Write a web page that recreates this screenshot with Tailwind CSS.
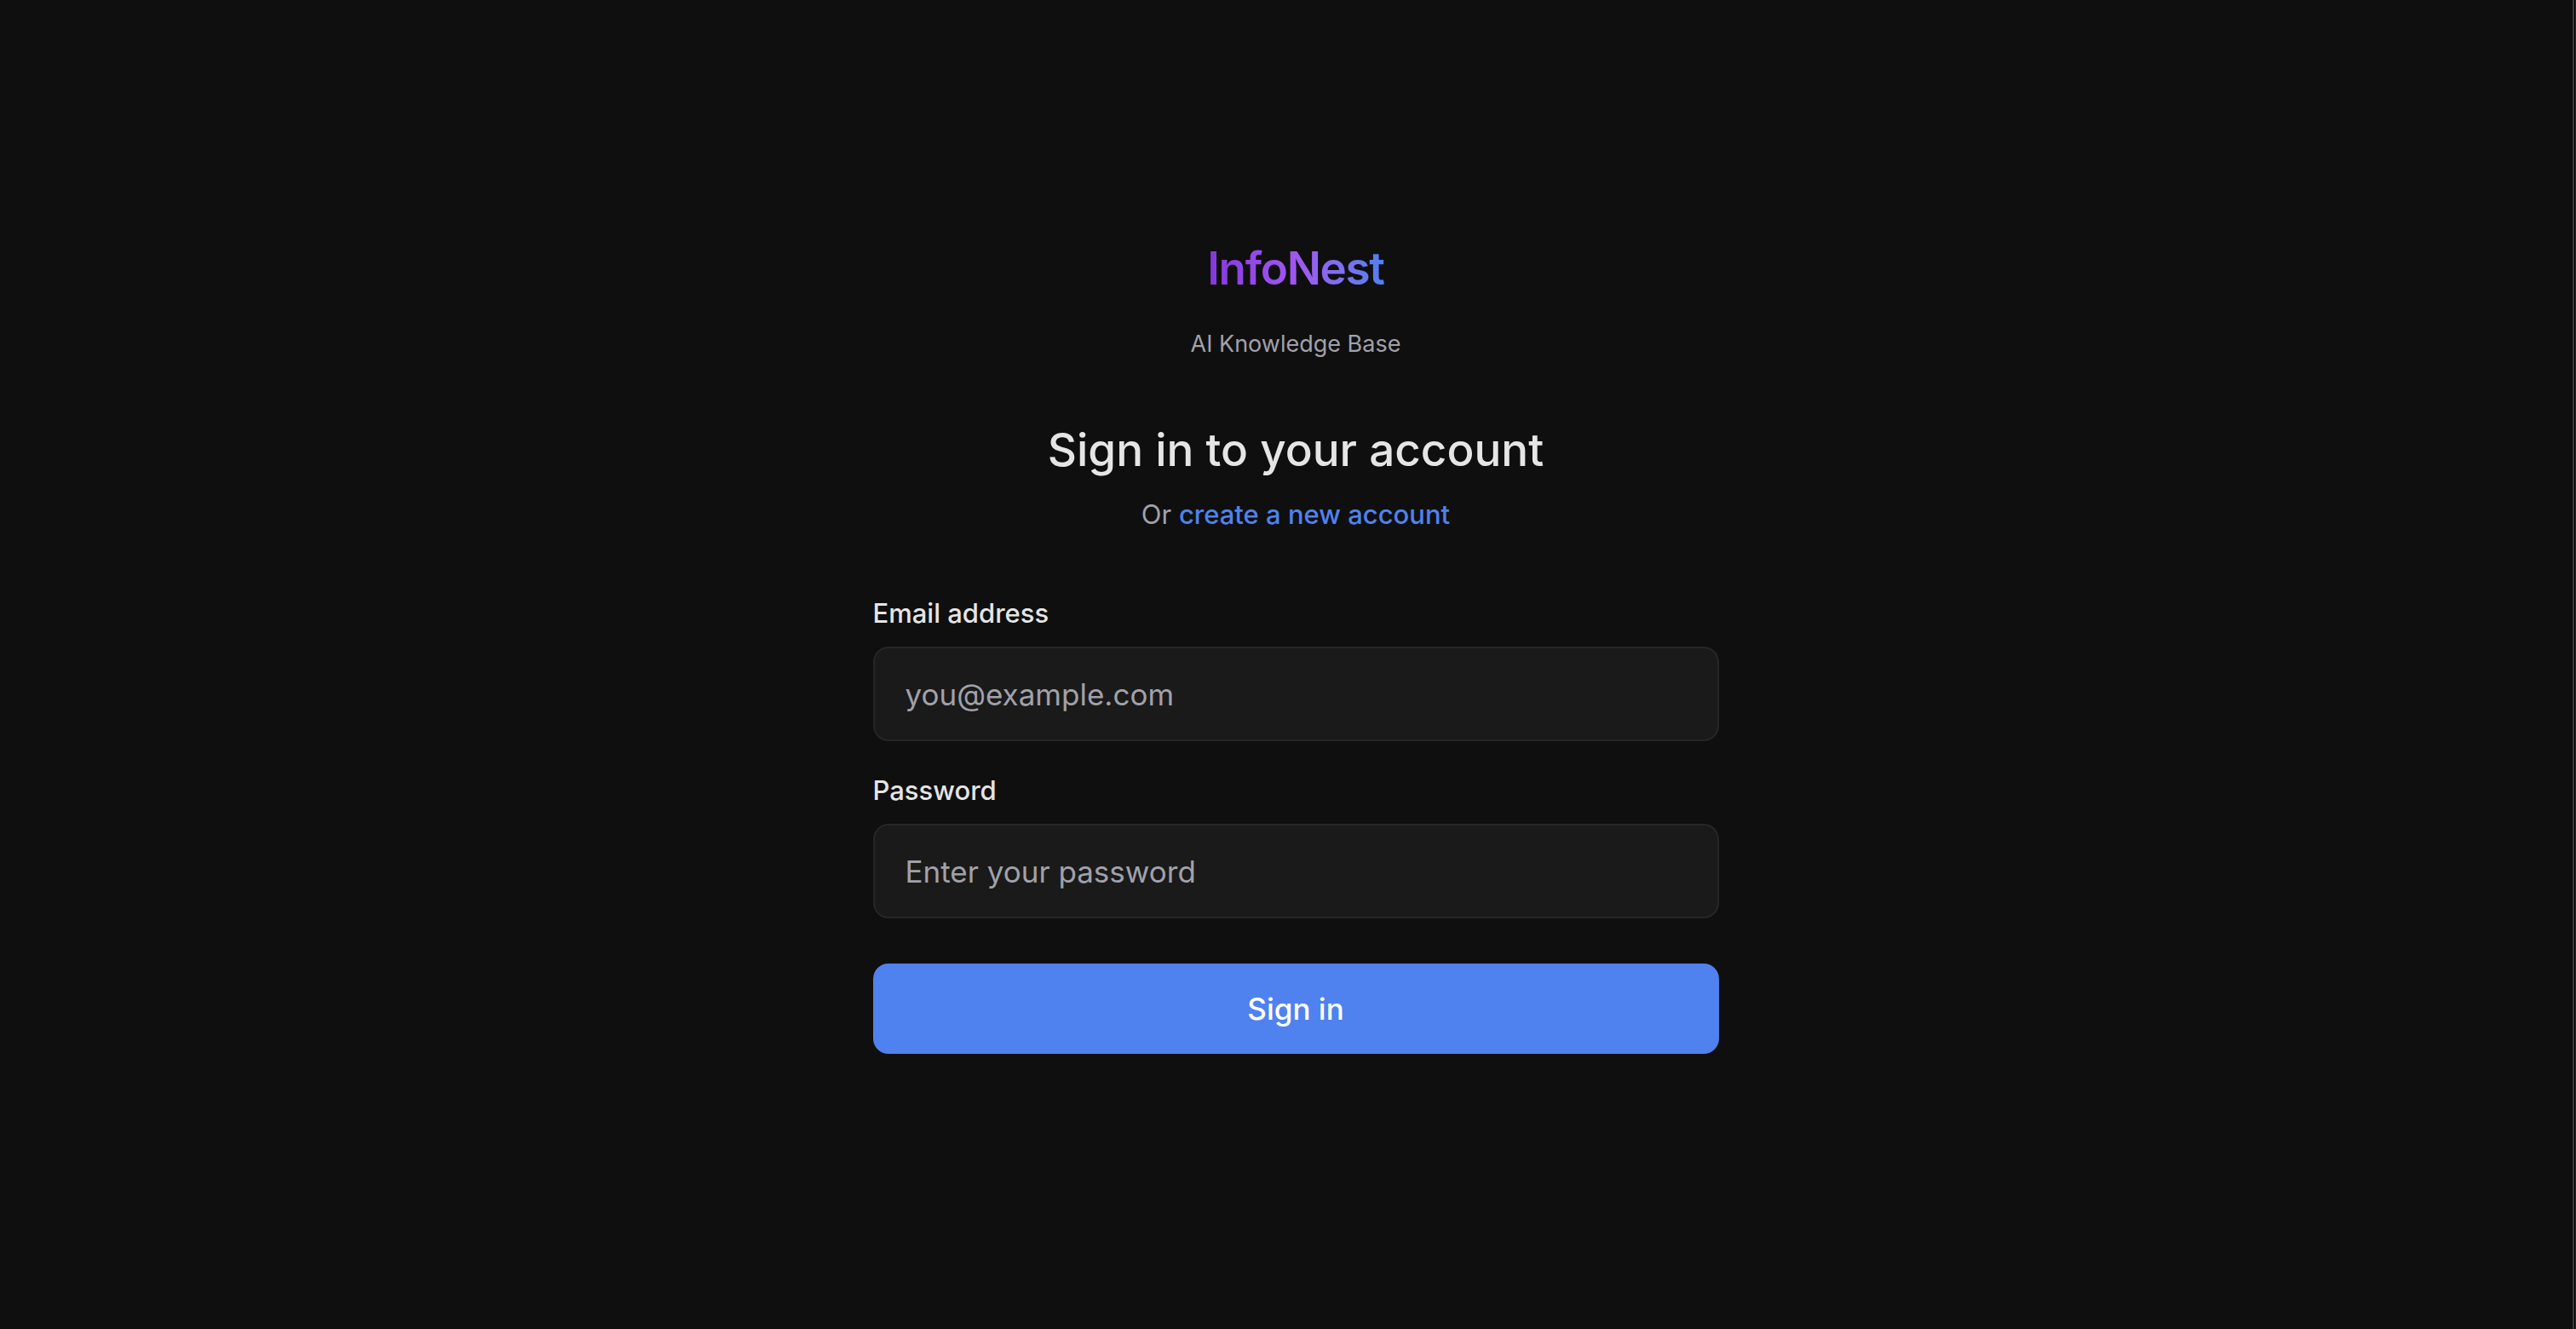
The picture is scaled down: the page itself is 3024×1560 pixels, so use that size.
<!DOCTYPE html>
<html lang="en">
<head>
  <meta charset="UTF-8">
  <meta name="viewport" content="width=device-width, initial-scale=1.0">
  <title>InfoNest - Sign in</title>
  <script src="https://cdn.jsdelivr.net/npm/@tailwindcss/browser@4"></script>
</head>
<body class="bg-[#0f0f0f] font-['Inter',sans-serif] text-[#e5e5e5]">
  <div class="relative flex min-h-screen justify-center overflow-hidden pt-[280px] pl-[18px]">
    <main class="w-full max-w-[993px]">
      <!-- Brand -->
      <header class="flex flex-col items-center text-center">
        <h1 class="bg-linear-to-r from-[#8338dc] via-[#a057f2] to-[#4e80ee] bg-clip-text text-[53px] leading-[70px] font-semibold tracking-tight text-transparent">InfoNest</h1>
        <p class="mt-9 text-[27px] leading-9 text-[#a1a1aa]">AI Knowledge Base</p>
        <h2 class="mt-[72px] text-[53px] leading-[68px] font-medium">Sign in to your account</h2>
        <p class="mt-[18px] text-[31px] leading-12 text-[#a1a1aa]">Or <a href="#" class="font-medium text-[#4f82ee]">create a new account</a></p>
      </header>

      <!-- Sign in form -->
      <form class="mt-[68px]">
        <label for="email" class="block text-[31px] leading-12 font-medium">Email address</label>
        <input type="email" id="email" placeholder="you@example.com" class="mt-[15px] block h-[111px] w-full rounded-[18px] border-2 border-[#262626] bg-[#1a1a1a] px-9 text-[35px] placeholder:text-[#a1a1aa]">
        <label for="password" class="mt-[34px] block text-[31px] leading-12 font-medium">Password</label>
        <input type="password" id="password" placeholder="Enter your password" class="mt-[15px] block h-[111px] w-full rounded-[18px] border-2 border-[#262626] bg-[#1a1a1a] px-9 text-[35px] placeholder:text-[#a1a1aa]">
        <button type="submit" class="mt-[53px] block h-[106px] w-full rounded-[18px] bg-[#4f82ee] text-[35px] font-medium text-white">Sign in</button>
      </form>
    </main>

    <!-- Window edge -->
    <div class="absolute inset-y-0 right-0 w-1 border-r border-l-2 border-r-[#262626] border-l-[#3a3a3a] bg-black"></div>
  </div>
</body>
</html>
